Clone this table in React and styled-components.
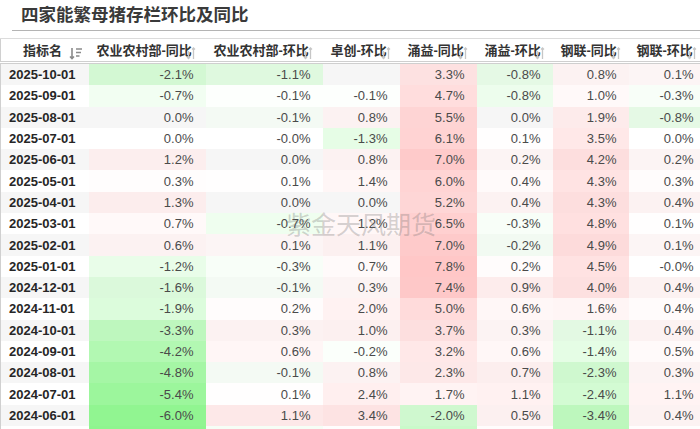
import React from "react";
import styled, { createGlobalStyle } from "styled-components";

const GlobalStyle = createGlobalStyle`
  html, body { margin: 0; padding: 0; background: #fff; }
  body { overflow: hidden; font-family: "Liberation Sans", "Noto Sans CJK SC", sans-serif; }
`;

const Page = styled.div`
  position: relative;
  width: 700px;
  height: 429px;
  overflow: hidden;
  background: #fff;
`;

const TitleBar = styled.div`
  margin-left: 12px;
  padding-left: 9px;
  border-bottom: 1px solid #b4b4b4;
  font-family: "Noto Sans CJK SC", sans-serif;
  font-weight: 700;
  font-size: 17.5px;
  line-height: 28px;
  color: #3a3a3a;
  box-sizing: border-box;
  height: 31px;
`;

const Table = styled.table`
  margin-top: 7px;
  width: 705px;
  table-layout: fixed;
  border-collapse: collapse;
  border-left: 1px solid #d0d0d0;
`;

const HeadRow = styled.tr`
  border-top: 1px solid #dcdcdc;
  border-bottom: 3px double #cfcfcf;
`;

const HeadCell = styled.th`
  height: 22px;
  padding: 0 0 0 ${(p) => (p.$first ? 22 : 8)}px;
  text-align: left;
  white-space: nowrap;
  overflow: hidden;
  font-family: "Liberation Sans", "Noto Sans CJK SC", sans-serif;
  font-weight: 700;
  font-size: 13px;
  color: #333;
  background: #fff;
`;

const IconWrap = styled.span`
  display: inline-block;
  vertical-align: -5px;
  margin-left: ${(p) => p.$gap}px;
  line-height: 0;
`;

const Row = styled.tr``;

const DateCell = styled.td`
  height: 21.3px;
  padding: 0 0 0 8px;
  font-weight: 700;
  font-size: 13px;
  color: #262626;
  background: ${(p) => (p.$stripe ? "#f6f6f6" : "#fff")};
  white-space: nowrap;
`;

const ValueCell = styled.td`
  height: 21.3px;
  padding: 0 12px 0 0;
  text-align: right;
  font-size: 13px;
  color: #4a4a4a;
  white-space: nowrap;
`;

const Watermark = styled.div`
  position: absolute;
  left: 286px;
  top: 208px;
  font-family: "Noto Sans CJK SC", sans-serif;
  font-size: 25px;
  line-height: 30px;
  color: rgba(110, 110, 110, 0.3);
  pointer-events: none;
  white-space: nowrap;
`;

const columns = [
  { name: "农业农村部-同比", w: 117, pos: 8, neg: 6.3 },
  { name: "农业农村部-环比", w: 117, pos: 4.5, neg: 5 },
  { name: "卓创-环比", w: 77, pos: 10, neg: 6 },
  { name: "涌益-同比", w: 77, pos: 9, neg: 5.5 },
  { name: "涌益-环比", w: 76, pos: 5, neg: 5 },
  { name: "钢联-同比", w: 76, pos: 10, neg: 6.3 },
  { name: "钢联-环比", w: 77, pos: 6, neg: 5 },
];

const rows = [
  ["2025-10-01", "-2.1", "-1.1", "", "3.3", "-0.8", "0.8", "0.1"],
  ["2025-09-01", "-0.7", "-0.1", "-0.1", "4.7", "-0.8", "1.0", "-0.3"],
  ["2025-08-01", "0.0", "-0.1", "0.8", "5.5", "0.0", "1.9", "-0.8"],
  ["2025-07-01", "0.0", "-0.0", "-1.3", "6.1", "0.1", "3.5", "0.0"],
  ["2025-06-01", "1.2", "0.0", "0.8", "7.0", "0.2", "4.2", "0.2"],
  ["2025-05-01", "0.3", "0.1", "1.4", "6.0", "0.4", "4.3", "0.3"],
  ["2025-04-01", "1.3", "0.0", "0.0", "5.2", "0.4", "4.3", "0.4"],
  ["2025-03-01", "0.7", "-0.7", "1.2", "6.5", "-0.3", "4.8", "0.1"],
  ["2025-02-01", "0.6", "0.1", "1.1", "7.0", "-0.2", "4.9", "0.1"],
  ["2025-01-01", "-1.2", "-0.3", "0.7", "7.8", "0.2", "4.5", "-0.0"],
  ["2024-12-01", "-1.6", "-0.1", "0.3", "7.4", "0.9", "4.0", "0.4"],
  ["2024-11-01", "-1.9", "0.2", "2.0", "5.0", "0.6", "1.6", "0.4"],
  ["2024-10-01", "-3.3", "0.3", "1.0", "3.7", "0.3", "-1.1", "0.4"],
  ["2024-09-01", "-4.2", "0.6", "-0.2", "3.2", "0.6", "-1.4", "0.5"],
  ["2024-08-01", "-4.8", "-0.1", "0.8", "2.3", "0.7", "-2.3", "0.3"],
  ["2024-07-01", "-5.4", "0.1", "2.4", "1.7", "1.1", "-2.4", "1.1"],
  ["2024-06-01", "-6.0", "1.1", "3.4", "-2.0", "0.5", "-3.4", "0.4"],
];

// the next row is only a sliver at the bottom edge: only its tints show
const sliver = ["-6.2", "-0.4", "0.3", "-2.6", "0.2", "-3.8", "0.2"];

function cellColor(raw, col, stripe) {
  const base = stripe ? 246 : 255;
  if (raw === "") return `rgb(${base},${base},${base})`;
  const v = parseFloat(raw);
  if (v === 0) return `rgb(${base},${base},${base})`;
  const mix = (a, b, t) => Math.round(a + (b - a) * t);
  if (v > 0) {
    const t = Math.min(1, v / col.pos);
    return `rgb(${mix(Math.max(base, 252), 255, t)},${mix(base, 190, t)},${mix(base, 190, t)})`;
  }
  const t = Math.min(1, -v / col.neg);
  return `rgb(${mix(base, 140, t)},${mix(Math.max(base, 250), 245, t)},${mix(base, 140, t)})`;
}

const SortIcon = () => (
  <svg width="10" height="14" viewBox="0 0 10 14" fill="none" stroke="#c6c6c6" strokeWidth="1.3">
    <path d="M2.5 5 V12.5 M1 11 L2.5 12.5 L4 11" />
    <path d="M7.5 13 V2 M6 3.5 L7.5 2 L9 3.5" />
  </svg>
);

const ActiveSortIcon = () => (
  <svg width="14" height="14" viewBox="0 0 14 14" fill="none" stroke="#8a8a8a" strokeWidth="1.6">
    <path d="M3 2 V12.5 M1 10.5 L3 12.5 L5 10.5" />
    <path d="M7 3 H13 M7 6.5 H12 M7 10 H10.5" />
  </svg>
);

export default function App() {
  return (
    <Page>
      <GlobalStyle />
      <TitleBar>四家能繁母猪存栏环比及同比</TitleBar>
      <Table>
        <colgroup>
          <col style={{ width: 88 }} />
          {columns.map((c) => (
            <col key={c.name} style={{ width: c.w }} />
          ))}
        </colgroup>
        <thead>
          <HeadRow>
            <HeadCell $first>
              指标名
              <IconWrap $gap={7}>
                <ActiveSortIcon />
              </IconWrap>
            </HeadCell>
            {columns.map((c) => (
              <HeadCell key={c.name}>
                {c.name}
                <IconWrap $gap={-6}>
                  <SortIcon />
                </IconWrap>
              </HeadCell>
            ))}
          </HeadRow>
        </thead>
        <tbody>
          {rows.map((r, i) => {
            const stripe = i % 2 === 0;
            return (
              <Row key={r[0]}>
                <DateCell $stripe={stripe}>{r[0]}</DateCell>
                {columns.map((c, j) => (
                  <ValueCell key={c.name} style={{ background: cellColor(r[j + 1], c, stripe) }}>
                    {r[j + 1] === "" ? "" : `${r[j + 1]}%`}
                  </ValueCell>
                ))}
              </Row>
            );
          })}
          <Row>
            <DateCell $stripe={false} />
            {columns.map((c, j) => (
              <ValueCell key={c.name} style={{ background: cellColor(sliver[j], c, false) }} />
            ))}
          </Row>
        </tbody>
      </Table>
      <Watermark>紫金天风期货</Watermark>
    </Page>
  );
}
